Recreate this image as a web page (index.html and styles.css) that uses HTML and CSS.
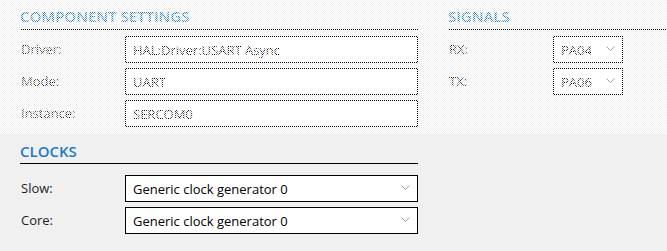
FILE: index.html
```html
<!DOCTYPE html>
<html lang="en">

<head>
    <meta charset="UTF-8">
    <title>Component Settings</title>
    <link rel="stylesheet" href="styles.css">
</head>

<body>
    <div class="top">
        <div class="section settings">
            <h2 class="section-title">Component Settings</h2>
            <div class="row">
                <span class="label">Driver:</span>
                <div class="select wide"><span>HAL:Driver:USART Async</span><svg class="chevron" viewBox="0 0 9 5"><path d="M0.5 0.5 L4.5 4.5 L8.5 0.5" /></svg></div>
            </div>
            <div class="row">
                <span class="label">Mode:</span>
                <div class="select wide"><span>UART</span><svg class="chevron" viewBox="0 0 9 5"><path d="M0.5 0.5 L4.5 4.5 L8.5 0.5" /></svg></div>
            </div>
            <div class="row">
                <span class="label">Instance:</span>
                <div class="select wide"><span>SERCOM0</span><svg class="chevron" viewBox="0 0 9 5"><path d="M0.5 0.5 L4.5 4.5 L8.5 0.5" /></svg></div>
            </div>
        </div>

        <div class="section signals">
            <h2 class="section-title">Signals</h2>
            <div class="row">
                <span class="label">RX:</span>
                <div class="select small"><span>PA04</span><svg class="chevron" viewBox="0 0 9 5"><path d="M0.5 0.5 L4.5 4.5 L8.5 0.5" /></svg></div>
            </div>
            <div class="row">
                <span class="label">TX:</span>
                <div class="select small"><span>PA06</span><svg class="chevron" viewBox="0 0 9 5"><path d="M0.5 0.5 L4.5 4.5 L8.5 0.5" /></svg></div>
            </div>
        </div>

        <!-- greyed-out checker over the locked block -->
        <svg class="disabled-mask" width="100%" height="100%">
            <defs>
                <pattern id="checker" width="2" height="2" patternUnits="userSpaceOnUse">
                    <rect x="1" y="0" width="1" height="1" fill="#fff" />
                    <rect x="0" y="1" width="1" height="1" fill="#fff" />
                </pattern>
            </defs>
            <rect width="100%" height="100%" fill="url(#checker)" />
        </svg>
    </div>

    <div class="section clocks">
        <h2 class="section-title">Clocks</h2>
        <div class="row">
            <span class="label">Slow:</span>
            <div class="select wide"><span>Generic clock generator 0</span><svg class="chevron" viewBox="0 0 9 5"><path d="M0.5 0.5 L4.5 4.5 L8.5 0.5" /></svg></div>
        </div>
        <div class="row">
            <span class="label">Core:</span>
            <div class="select wide"><span>Generic clock generator 0</span><svg class="chevron" viewBox="0 0 9 5"><path d="M0.5 0.5 L4.5 4.5 L8.5 0.5" /></svg></div>
        </div>
    </div>
</body>

</html>
```

FILE: styles.css
```css
body {
    margin: 0;
    width: 667px;
    height: 251px;
    overflow: hidden;
    font-family: 'Open Sans', sans-serif;
    font-size: 13px;
    color: #1e1e1e;
    background-color: #f0f0f0;
}

.top {
    display: flex;
    position: relative;
    height: 134px;
}

.disabled-mask {
    position: absolute;
    top: 0;
    left: 0;
    pointer-events: none;
    shape-rendering: crispEdges;
}

.section {
    padding-top: 6px;
}

.settings {
    margin-left: 20px;
    width: 398px;
}

.signals {
    margin-left: 30px;
    flex: 1;
}

.section-title {
    margin: 0 0 6px 0;
    padding-bottom: 3px;
    font-size: 15px;
    line-height: 20px;
    font-weight: 600;
    text-transform: uppercase;
    color: #1a7ac4;
    border-bottom: 1px solid #000;
}

.row {
    display: flex;
    align-items: center;
    height: 27px;
    margin-bottom: 5px;
}

.label {
    width: 105px;
    flex-shrink: 0;
    padding-left: 1px;
    box-sizing: border-box;
    margin-top: -2px;
}

.select {
    display: flex;
    align-items: center;
    justify-content: space-between;
    box-sizing: border-box;
    height: 27px;
    padding: 0 7px;
    background-color: #fff;
    border: 1px solid #000;
    color: #000;
}

.wide {
    width: 293px;
}

.small {
    width: 70px;
}

.chevron {
    width: 9px;
    height: 5px;
    fill: none;
    stroke: #a0a0a0;
    stroke-width: 1;
    margin-top: -3px;
}

.clocks {
    width: 398px;
    margin-left: 20px;
    padding-top: 7px;
}

.clocks .section-title {
    padding-bottom: 2px;
    margin-bottom: 11px;
}
```
